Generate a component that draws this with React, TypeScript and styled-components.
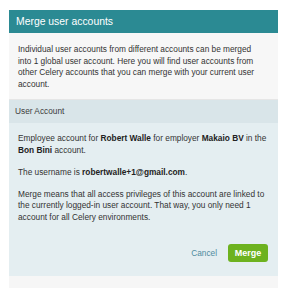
import styled, { createGlobalStyle } from 'styled-components';

const GlobalStyle = createGlobalStyle`
  body {
    margin: 0;
    background: #ffffff;
    font-family: "Liberation Sans", Arial, sans-serif;
  }
`;

const Card = styled.div`
  margin: 10px 0 0 9px;
  width: 269px;
`;

const Header = styled.div`
  display: flex;
  align-items: center;
  height: 23px;
  padding-left: 7px;
  background: #2b8a93;
  color: #ffffff;
  font-size: 10.4px;
`;

const Intro = styled.div`
  padding: 11px 16px 8px 9px;
  background: #f7f7f7;
  border-bottom: 1px solid #e6e6e6;
`;

const Text = styled.p<{ $gap?: number }>`
  margin: 0 0 ${({ $gap }) => $gap ?? 0}px 0;
  font-size: 8.3px;
  line-height: 11.7px;
  color: #333333;

  b {
    font-weight: bold;
    color: #222222;
  }
`;

const SectionHeader = styled.div`
  display: flex;
  align-items: center;
  height: 23px;
  padding-left: 6px;
  background: #d9e5e9;
  color: #3c3c3c;
  font-size: 8.3px;
`;

const SectionBody = styled.div`
  padding: 10px 10px 14px 9px;
  background: #e4eef1;
`;

const Actions = styled.div`
  display: flex;
  justify-content: flex-end;
  align-items: center;
  gap: 11px;
  margin-top: 20px;
`;

const CancelLink = styled.span`
  font-size: 8.3px;
  color: #4f8c9e;
`;

const MergeButton = styled.button`
  width: 40px;
  height: 18px;
  padding: 0;
  border: none;
  border-radius: 3px;
  background: #6db21f;
  color: #ffffff;
  font-family: inherit;
  font-size: 9px;
  font-weight: bold;
`;

const Footer = styled.div`
  height: 12px;
  background: #f6f6f6;
`;

const App = () => {
  return (
    <>
      <GlobalStyle />
      <Card>
        <Header>Merge user accounts</Header>
        <Intro>
          <Text>
            Individual user accounts from different accounts can be merged into 1 global user
            account. Here you will find user accounts from other Celery accounts that you can
            merge with your current user account.
          </Text>
        </Intro>
        <SectionHeader>User Account</SectionHeader>
        <SectionBody>
          <Text $gap={10.3}>
            Employee account for <b>Robert Walle</b> for employer <b>Makaio BV</b> in the{' '}
            <b>Bon Bini</b> account.
          </Text>
          <Text $gap={10.3}>
            The username is <b>robertwalle+1@gmail.com</b>.
          </Text>
          <Text>
            Merge means that all access privileges of this account are linked to the currently
            logged-in user account. That way, you only need 1 account for all Celery
            environments.
          </Text>
          <Actions>
            <CancelLink>Cancel</CancelLink>
            <MergeButton>Merge</MergeButton>
          </Actions>
        </SectionBody>
        <Footer />
      </Card>
    </>
  );
};

export default App;
